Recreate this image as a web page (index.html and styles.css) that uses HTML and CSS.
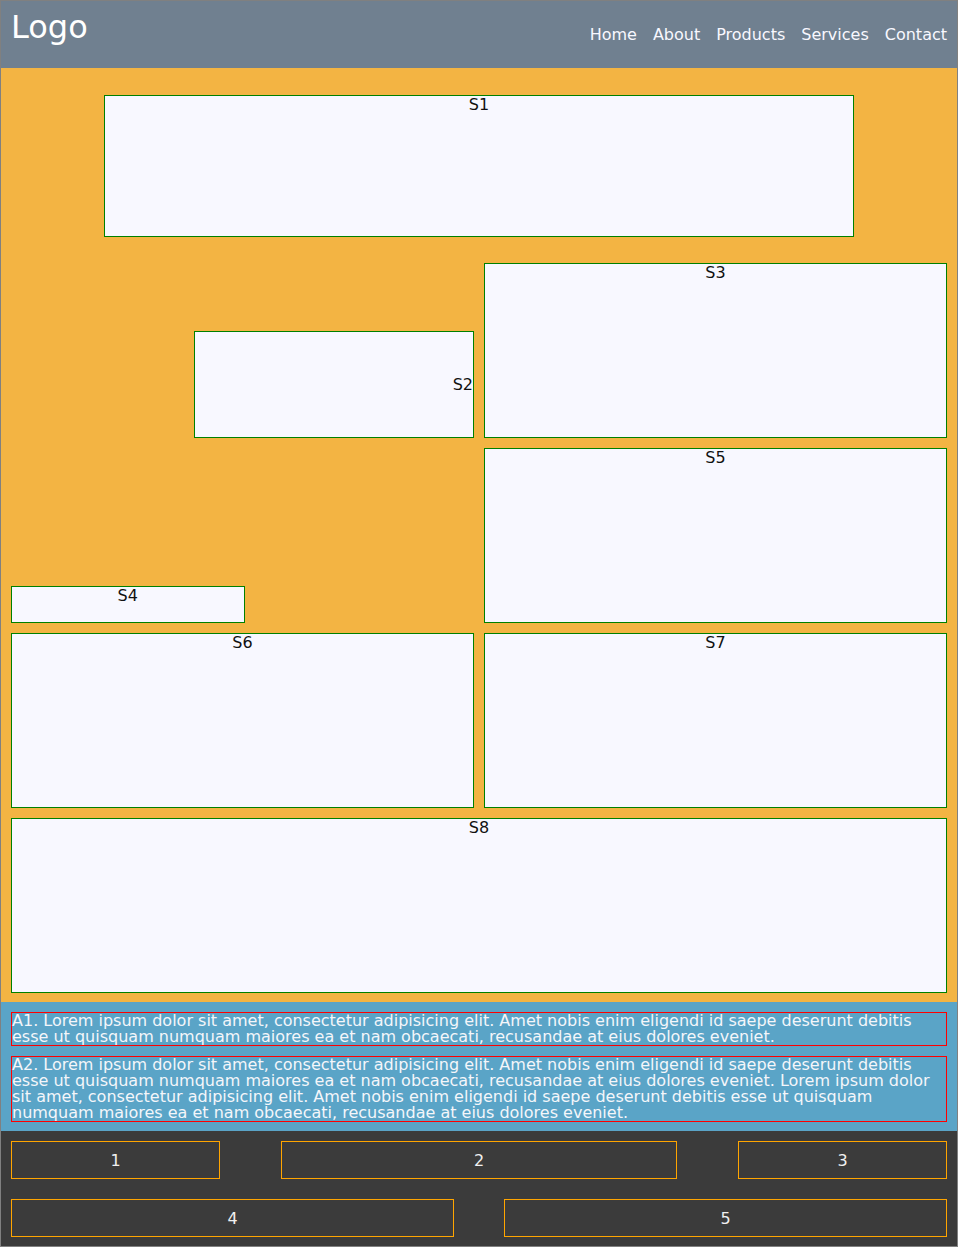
FILE: index.html
```html
<!DOCTYPE html>
<html lang="en">
<head>
<meta charset="utf-8">
<title>Layout</title>
<link rel="stylesheet" href="styles.css">
</head>
<body>
<div class="page">
  <header class="header">
    <div class="logo">Logo</div>
    <nav class="nav">
      <a href="#">Home</a>
      <a href="#">About</a>
      <a href="#">Products</a>
      <a href="#">Services</a>
      <a href="#">Contact</a>
    </nav>
  </header>
  <main class="main">
    <section class="box s1">S1</section>
    <section class="box s2">S2</section>
    <section class="box s3">S3</section>
    <section class="box s4">S4</section>
    <section class="box s5">S5</section>
    <section class="box s6">S6</section>
    <section class="box s7">S7</section>
    <section class="box s8">S8</section>
  </main>
  <aside class="articles">
    <p class="art">A1. Lorem ipsum dolor sit amet, consectetur adipisicing elit. Amet nobis enim eligendi id saepe deserunt debitis esse ut quisquam numquam maiores ea et nam obcaecati, recusandae at eius dolores eveniet.</p>
    <p class="art">A2. Lorem ipsum dolor sit amet, consectetur adipisicing elit. Amet nobis enim eligendi id saepe deserunt debitis esse ut quisquam numquam maiores ea et nam obcaecati, recusandae at eius dolores eveniet. Lorem ipsum dolor sit amet, consectetur adipisicing elit. Amet nobis enim eligendi id saepe deserunt debitis esse ut quisquam numquam maiores ea et nam obcaecati, recusandae at eius dolores eveniet.</p>
  </aside>
  <footer class="footer">
    <div class="frow">
      <div class="fbtn f-small">1</div>
      <div class="fbtn f-mid">2</div>
      <div class="fbtn f-small">3</div>
    </div>
    <div class="frow">
      <div class="fbtn f-half">4</div>
      <div class="fbtn f-half">5</div>
    </div>
  </footer>
</div>
</body>
</html>
```
FILE: styles.css
```css
* { box-sizing: border-box; }
html, body { margin: 0; padding: 0; }
body {
  font-family: "DejaVu Sans", sans-serif;
  font-size: 16px;
  background: #ffffff;
}
.page {
  width: 958px;
  border: 1px solid #808080;
}
.header {
  height: 67px;
  background: #708090;
  display: flex;
  justify-content: space-between;
  align-items: flex-start;
  padding: 0 10px;
  color: #ffffff;
}
.logo {
  font-size: 32px;
  line-height: 37px;
  margin-top: 8px;
}
.nav {
  display: flex;
  gap: 16px;
  margin-top: 25px;
  font-size: 16px;
  line-height: 18px;
}
.nav a {
  color: #f8f8ff;
  text-decoration: none;
}
.main {
  background: #f3b443;
  padding: 10px 10px 9px;
  display: grid;
  grid-template-columns: 1fr 1fr;
  grid-auto-rows: 175px;
  gap: 10px;
}
.box {
  background: #f8f8ff;
  border: 1px solid #008000;
  text-align: center;
  color: #111;
  font-size: 16px;
  line-height: 18px;
}
.s1 {
  box-sizing: content-box;
  grid-column: 1 / 3;
  width: 80%;
  height: 80%;
  justify-self: center;
  align-self: center;
}
.s2 {
  box-sizing: content-box;
  grid-column: 1;
  width: 60%;
  height: 60%;
  justify-self: end;
  align-self: end;
  display: flex;
  align-items: center;
  justify-content: flex-end;
}
.s3 { grid-column: 2; }
.s4 {
  box-sizing: content-box;
  grid-column: 1;
  width: 50%;
  height: 20%;
  align-self: end;
}
.s5 { grid-column: 2; }
.s6 { grid-column: 1; }
.s7 { grid-column: 2; }
.s8 { grid-column: 1 / 3; }
.articles {
  background: #5aa4c7;
  padding: 10px 10px 9px;
  display: flex;
  flex-direction: column;
  gap: 10px;
}
.art {
  margin: 0;
  border: 1px solid #ff0000;
  color: #f4f6fa;
  font-size: 16px;
  line-height: 16px;
}
.footer {
  background: #3b3b3b;
  padding: 10px 10px 9px;
  display: flex;
  flex-direction: column;
  gap: 20px;
}
.frow {
  display: flex;
  justify-content: space-between;
}
.fbtn {
  height: 38px;
  border: 1px solid #ffa500;
  color: #f0f0f0;
  display: flex;
  align-items: center;
  justify-content: center;
  font-size: 16px;
}
.f-small { width: 22.33%; }
.f-mid { width: 42.31%; }
.f-half { width: 47.33%; }
```
